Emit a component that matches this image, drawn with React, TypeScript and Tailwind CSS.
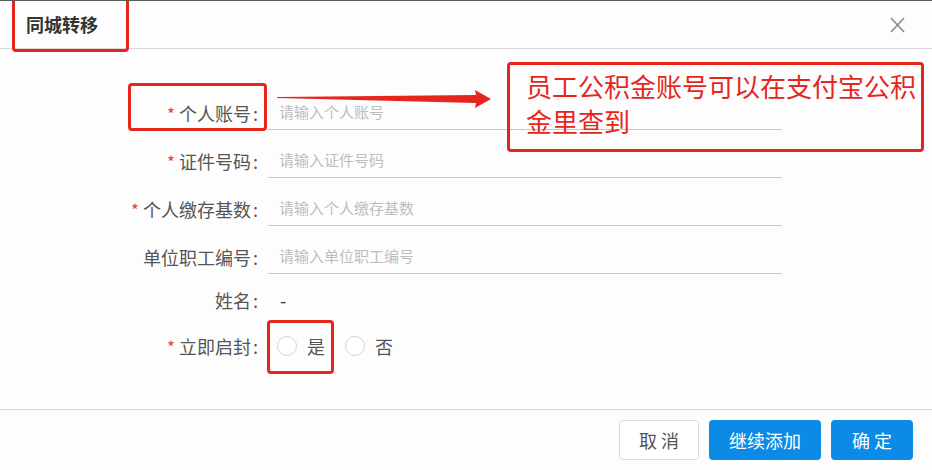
import React from "react"

const font = { fontFamily: '"Noto Sans CJK SC", "Noto Sans", sans-serif' }

interface RowProps {
  label: string
  required?: boolean
  placeholder: string
}

function InputRow({ label, required, placeholder }: RowProps) {
  return (
    <div className="flex items-center h-[34px] mb-[14px]">
      <div className="w-[258px] text-right text-[18px] text-[#555] leading-none">
        {required && <span className="text-[#e2463c] mr-[4px] text-[17px]">*</span>}
        {label}
        <span className="ml-[2px]">:</span>
      </div>
      <div className="ml-[10px] w-[514px] h-[34px] border-b border-[#c8c8c8] flex items-center pl-[11px] text-[15px] text-[#bdbdbd]">
        {placeholder}
      </div>
    </div>
  )
}

function Radio({ text }: { text: string }) {
  return (
    <div className="flex items-center">
      <span className="w-[20px] h-[20px] rounded-full border border-[#d4d4d4] bg-white" />
      <span className="ml-[10px] text-[18px] text-[#555]">{text}</span>
    </div>
  )
}

export default function App() {
  return (
    <div style={font} className="relative w-[932px] h-[470px] overflow-hidden bg-[#fdfdfd] border-t border-[#5a5a5a]">
      {/* header */}
      <div className="h-[48px] border-b border-[#d9d9d9] flex items-center justify-between pl-[26px] pr-[27px]">
        <div className="text-[18px] font-bold text-[#333]">同城转移</div>
        <svg width="15" height="16" viewBox="0 0 15 16">
          <path d="M1 1 L14 15 M14 1 L1 15" stroke="#8a8a8a" strokeWidth="1.6" fill="none" />
        </svg>
      </div>

      {/* form */}
      <div className="pt-[47px] h-[360px]">
        <InputRow label="个人账号" required placeholder="请输入个人账号" />
        <InputRow label="证件号码" required placeholder="请输入证件号码" />
        <InputRow label="个人缴存基数" required placeholder="请输入个人缴存基数" />
        <InputRow label="单位职工编号" placeholder="请输入单位职工编号" />
        <div className="flex items-center h-[34px] -mt-[5px]">
          <div className="w-[258px] text-right text-[18px] text-[#555] leading-none">
            姓名<span className="ml-[2px]">:</span>
          </div>
          <div className="ml-[22px] text-[18px] text-[#333]">-</div>
        </div>
        <div className="flex items-center h-[34px] mt-[12px]">
          <div className="w-[258px] text-right text-[18px] text-[#555] leading-none">
            <span className="text-[#e2463c] mr-[4px] text-[17px]">*</span>立即启封<span className="ml-[2px]">:</span>
          </div>
          <div className="ml-[19px] flex items-center gap-[20px]">
            <Radio text="是" />
            <Radio text="否" />
          </div>
        </div>
      </div>

      {/* footer */}
      <div className="border-t border-[#d6d6d6] flex justify-end pt-[10px] pr-[19px] gap-[10px]">
        <button className="w-[80px] h-[40px] rounded-[4px] border border-[#dcdcdc] bg-white text-[18px] text-[#555]">取 消</button>
        <button className="w-[112px] h-[40px] rounded-[4px] bg-[#0b8ae6] text-[18px] text-white">继续添加</button>
        <button className="w-[82px] h-[40px] rounded-[4px] bg-[#0b8ae6] text-[18px] text-white">确 定</button>
      </div>

      {/* annotations */}
      <div className="absolute left-[12px] top-[-4px] w-[117px] h-[55px] border-[3px] border-[#e5261d] rounded-[4px]" />
      <div className="absolute left-[128px] top-[82px] w-[139px] h-[48px] border-[3px] border-[#e5261d] rounded-[4px]" />
      <div className="absolute left-[267px] top-[319px] w-[67px] h-[54px] border-[3px] border-[#e5261d] rounded-[4px]" />
      <svg className="absolute left-[270px] top-[85px]" width="230" height="30" viewBox="0 0 230 30">
        <polygon points="7,11 206,9 205,4 221,13 205,22 206,17 7,12" fill="#e5261d" />
      </svg>
      <div className="absolute left-[507px] top-[61px] w-[417px] h-[90px] border-[3px] border-[#e5261d] rounded-[4px] pl-[16px] pt-[3px] text-[26px] leading-[35px] text-[#e5261d] whitespace-nowrap">
        员工公积金账号可以在支付宝公积
        <br />
        金里查到
      </div>
    </div>
  )
}
